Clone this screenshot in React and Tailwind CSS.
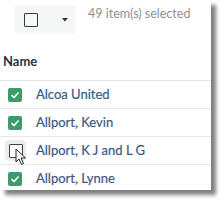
import React from 'react';

const rows = [
  { name: 'Alcoa United', checked: true },
  { name: 'Allport, Kevin', checked: true },
  { name: 'Allport, K J and L G', checked: false, hover: true },
  { name: 'Allport, Lynne', checked: true },
];

const GreenCheck = () => (
  <span className="w-[14px] h-[14px] rounded-[2px] bg-[#3f9a6b] flex items-center justify-center">
    <svg width="10" height="10" viewBox="0 0 10 10">
      <path d="M1.5 5.2 L4 7.5 L8.5 2.5" fill="none" stroke="white" strokeWidth="1.6" />
    </svg>
  </span>
);

const Cursor = () => (
  <svg className="absolute left-[15px] top-[11px]" width="12" height="18" viewBox="0 0 12 18">
    <path d="M1 1 L1 14 L4 11 L6.5 16.5 L8.5 15.5 L6 10 L10.5 10 Z" fill="white" stroke="#222" strokeWidth="1" strokeLinejoin="round" />
  </svg>
);

export default function App() {
  return (
    <div className="w-[223px] h-[202px] bg-white overflow-hidden" style={{ fontFamily: 'Lato, "Open Sans", sans-serif' }}>
      <div className="w-[211px] h-[190px] bg-white shadow-[5px_5px_4px_rgba(0,0,0,0.5)] overflow-hidden">
        {/* toolbar */}
        <div className="flex items-center pt-[5px]">
          <div className="ml-[14px] w-[62px] h-[29px] bg-[#f6f7f7] rounded-[4px] flex items-center">
            <span className="ml-[10px] w-[14px] h-[14px] border-[1.5px] border-[#3a3a3a] rounded-[1px]" />
            <svg className="ml-[24px]" width="6" height="4" viewBox="0 0 6 4">
              <path d="M0 0 L6 0 L3 3.5 Z" fill="#333" />
            </svg>
          </div>
          <span className="ml-[12px] -mt-[11px] text-[12.5px] text-[#909090]">49 item(s) selected</span>
        </div>

        {/* header */}
        <div className="h-[47px] border-b border-[#e4e4e4] flex items-end pb-[12px] pl-[3px]">
          <span className="text-[13px] font-bold text-[#2a3540] leading-none">Name</span>
        </div>

        {rows.map((r) => (
          <div key={r.name} className="h-[28px] border-b border-[#e8e8e8] flex items-center relative">
            <div className="w-[36px] flex items-center">
              {r.checked ? (
                <span className="ml-[8px]"><GreenCheck /></span>
              ) : (
                <span className="ml-[5px] w-[21px] h-[21px] rounded-[4px] bg-[#ececec] flex items-center justify-center">
                  <span className="w-[14px] h-[14px] border-[1.5px] border-[#444] rounded-[1px] bg-white" />
                </span>
              )}
            </div>
            <span className="text-[13px] text-[#3b5984] [-webkit-text-stroke:0.2px_#3b5984]">{r.name}</span>
            {r.hover && <Cursor />}
          </div>
        ))}
      </div>
    </div>
  );
}
